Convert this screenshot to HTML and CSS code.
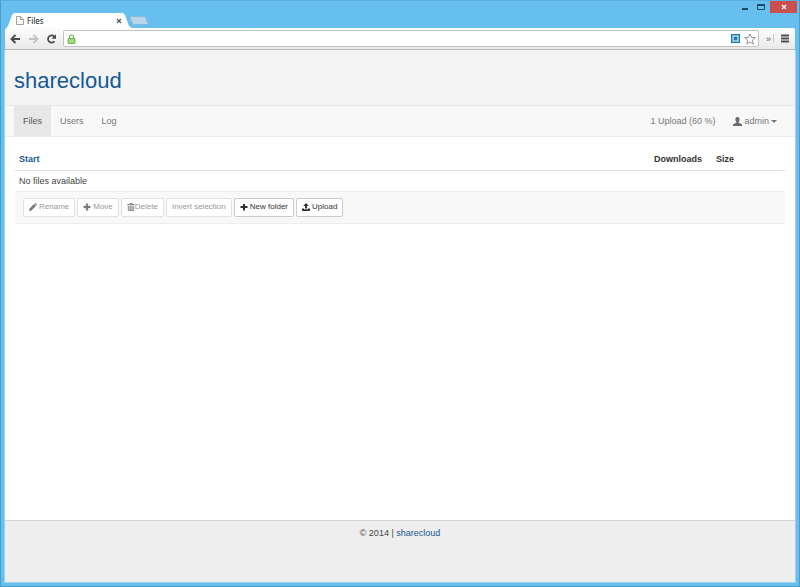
FILE: index.html
```
<!DOCTYPE html>
<html lang="en">

<head>
    <meta charset="UTF-8" />
    <meta name="viewport" content="width=device-width, initial-scale=1.0" />
    <title>Files</title>
    <link rel="stylesheet" href="styles.css">
</head>

<body>
    <div class="titlebar">
        <button class="win-btn" aria-label="Minimize">
            <svg width="8" height="8" viewBox="0 0 8 8"><path d="M1 5h6v2H1z" fill="#1d4a68"/></svg>
        </button>
        <button class="win-btn" aria-label="Maximize">
            <svg width="8" height="8" viewBox="0 0 8 8"><path d="M.5 1.500h7v5h-7z" fill="none" stroke="#1d4a68"/><path d="M0 1h8v2H0z" fill="#1d4a68"/></svg>
        </button>
        <button class="win-btn close" aria-label="Close">
            <svg width="6" height="6" viewBox="0 0 6 6"><path d="M1 1l4 4M5 1L1 5" stroke="#fff" stroke-width="1.3"/></svg>
        </button>
    </div>

    <div class="tabs">
        <div class="tab">
            <svg width="8" height="9" viewBox="0 0 8 9"><path d="M.5.5h4l3 3v5h-7zM4.500.5v3h3" fill="#fff" stroke="#8c8c8c" stroke-width=".8"/></svg>
            <span class="tab-title">Files</span>
            <button class="tab-close" aria-label="Close tab">
                <svg width="6" height="6" viewBox="0 0 6 6"><path d="M1 1l4 4M5 1L1 5" stroke="#555" stroke-width="1.1"/></svg>
            </button>
        </div>
        <button class="new-tab" aria-label="New tab">
            <svg width="20" height="9" viewBox="0 0 20 9"><path d="M1.500.5h13.500q1 0 1.500 1l2.500 6q.3 1-.7 1H5q-1 0-1.500-1L1 1.500Q.7.5 1.500.5z" fill="#b9d6e8" stroke="#88b9d6" stroke-width=".8"/></svg>
        </button>
    </div>

    <div class="toolbar">
        <button class="tool" aria-label="Back">
            <svg width="11" height="10" viewBox="0 0 11 10"><path d="M5.500 1L1.500 5l4 4M1.500 5H10" fill="none" stroke="#4d4d4d" stroke-width="1.900"/></svg>
        </button>
        <button class="tool" aria-label="Forward" disabled>
            <svg width="11" height="10" viewBox="0 0 11 10"><path d="M5.500 1l4 4-4 4M9.500 5H1" fill="none" stroke="#c4c4c4" stroke-width="1.900"/></svg>
        </button>
        <button class="tool" aria-label="Reload">
            <svg width="11" height="10" viewBox="0 0 11 10"><path d="M8.500 7.200A3.600 3.600 0 1 1 8.200 2.500" fill="none" stroke="#4d4d4d" stroke-width="1.800"/><path d="M10 .3v4.500H5.500z" fill="#4d4d4d"/></svg>
        </button>
        <div class="omnibox">
            <svg width="9" height="10" viewBox="0 0 9 10"><path d="M2.500 5V2.800a2 2 0 0 1 4 0V5" fill="none" stroke="#7cb85c" stroke-width="1.200"/><rect x="1" y="4.500" width="7" height="5" rx=".6" fill="#94d470" stroke="#62a744" stroke-width=".8"/><path d="M2 6.200h5M2 7.800h5" stroke="#c2eba9" stroke-width=".6"/></svg>
            <input type="text" aria-label="Address">
            <svg width="9" height="9" viewBox="0 0 9 9"><path d="M0 0h9v9H0z" fill="#1b7fb0"/><path d="M1.500 1.500h6v6h-6z" fill="#fff"/><path d="M2.500 2.500h4v4h-4z" fill="#1b7fb0"/></svg>
            <svg width="12" height="12" viewBox="0 0 12 12"><path d="M6 .9l1.500 3.500 3.800.3-2.900 2.500.9 3.800L6 9l-3.300 2 .9-3.800L.7 4.700l3.800-.3z" fill="#fff" stroke="#858585" stroke-width=".9"/></svg>
        </div>
        <button class="tool more" aria-label="More extensions">»</button>
        <button class="tool menu" aria-label="Menu">
            <svg width="8" height="9" viewBox="0 0 8 9"><path d="M0 1.500h8M0 4.500h8M0 7.500h8" stroke="#505050" stroke-width="2"/></svg>
        </button>
    </div>

    <div class="page">
        <header>
            <h1><a href="#">sharecloud</a></h1>
        </header>

        <nav>
            <a class="active" href="#">Files</a>
            <a href="#">Users</a>
            <a href="#">Log</a>
            <a class="uploads" href="#">1 Upload (60 %)</a>
            <a class="user" href="#">
                <svg width="9" height="9" viewBox="0 0 9 9"><path d="M4.500 0C6 0 6.700 1 6.600 2.500c0 1-.4 1.900-1 2.500v.8l2.500 1q.9.400.9 1.200v1H0V8q0-.8.900-1.200l2.500-1V5c-.6-.6-1-1.500-1-2.500C2.300 1 3 0 4.500 0z" fill="#6b6b6b"/></svg>
                admin
                <span class="caret"></span>
            </a>
        </nav>

        <main>
            <table>
                <thead>
                    <tr>
                        <th><a href="#">Start</a></th>
                        <th class="downloads">Downloads</th>
                        <th class="size">Size</th>
                    </tr>
                </thead>
                <tbody>
                    <tr>
                        <td colspan="3">No files available</td>
                    </tr>
                </tbody>
                <tfoot>
                    <tr>
                        <td colspan="3">
                            <div class="actions">
                                <button class="btn" disabled>
                                    <svg width="8" height="8" viewBox="0 0 8 8"><path d="M0 8l.6-2.500L5 1.100 6.900 3 2.500 7.400zM5.500.6l.5-.5q.3-.2.600 0L7.900 1.400q.2.300 0 .6l-.5.500z" fill="#777"/></svg>
                                    Rename
                                </button>
                                <button class="btn" disabled>
                                    <svg width="8" height="8" viewBox="0 0 8 8"><path d="M4 0l1.700 1.900H4.900v1.200h1.200V2.300L8 4 6.100 5.700V4.900H4.900v1.200h.8L4 8 2.300 6.100h.8V4.900H1.900v.8L0 4l1.900-1.700v.8h1.200V1.900h-.8z" fill="#777"/></svg>
                                    Move
                                </button>
                                <button class="btn tight" disabled>
                                    <svg width="8" height="8" viewBox="0 0 8 8"><path d="M.3 1.500h7.400M2.700 1.300V.5h2.600v.8M1.300 2.500v5h5.400v-5M2.800 2.500v4.500M4 2.500v4.500M5.200 2.500v4.500" fill="none" stroke="#777" stroke-width=".8"/></svg>
                                    Delete
                                </button>
                                <button class="btn" disabled>Invert selection</button>
                                <button class="btn">
                                    <svg width="8" height="8" viewBox="0 0 8 8"><path d="M3 1h2v2h2.500v2H5v2.500H3V5H.5V3H3z" fill="currentColor"/></svg>
                                    New folder
                                </button>
                                <button class="btn">
                                    <svg width="8" height="8" viewBox="0 0 8 8"><path d="M4 0l2.800 3H5v2.500H3V3H1.200zM0 5.500h2v.8h4v-.8h2V8H0z" fill="currentColor"/></svg>
                                    Upload
                                </button>
                            </div>
                        </td>
                    </tr>
                </tfoot>
            </table>
        </main>

        <footer>&copy; 2014 | <a href="#">sharecloud</a></footer>
    </div>
</body>

</html>
```
FILE: styles.css
```
:root {
    --frame: #66bfef;
    --frame-dark: #4a9dca;
    --link: #145a96;
}

* {
    box-sizing: border-box;
}

body {
    margin: 0;
    min-height: 100vh;
    padding: 0 4px 4px;
    border: 1px solid var(--frame-dark);
    border-top-color: #5aaedb;
    background: var(--frame);
    display: flex;
    flex-direction: column;
    font: 9px/12px "Liberation Sans", Arial, sans-serif;
    color: #444;
}

button {
    margin: 0;
    padding: 0;
    border: 0;
    background: none;
    font: inherit;
    color: inherit;
    display: flex;
    align-items: center;
    justify-content: center;
}

a {
    color: var(--link);
    text-decoration: none;
}

svg {
    flex: none;
    display: block;
}

/* window frame */
.titlebar {
    height: 12px;
    display: flex;
    justify-content: flex-end;
}

.win-btn {
    width: 16px;
    height: 12px;
}

.win-btn.close {
    width: 27px;
    margin-left: 1px;
    margin-right: -2px;
    background: #c9504f;
}

.tabs {
    height: 15px;
    padding-left: 1px;
    display: flex;
    align-items: flex-start;
}

.tab {
    width: 126px;
    height: 15px;
    padding: 0 10px;
    background: #fff;
    clip-path: polygon(0 100%, 2px 13px, 6px 2px, 8px 0, 117px 0, 119px 2px, 123px 13px, 100% 100%);
    display: flex;
    align-items: center;
    gap: 3px;
}

.tab-title {
    flex: 1;
    font-family: "Noto Sans", "Open Sans", sans-serif;
    font-size: 8px;
    color: #222;
}

.new-tab {
    margin-top: 3px;
    margin-left: -3px;
}

.toolbar {
    height: 22px;
    padding: 0 6px 0 5px;
    background: linear-gradient(#fdfdfd, #e9e9e9);
    border-bottom: 1px solid #b9b9b9;
    border-radius: 2px 2px 0 0;
    display: flex;
    align-items: center;
    gap: 7px;
}

.omnibox {
    flex: 1;
    height: 17px;
    margin-left: -1px;
    padding: 0 2px 0 3px;
    border: 1px solid #c3c3c3;
    border-radius: 2px;
    background: #fff;
    display: flex;
    align-items: center;
    gap: 4px;
}

.omnibox input {
    flex: 1;
    min-width: 0;
    padding: 0;
    border: 0;
    outline: 0;
    background: none;
    font: inherit;
}

.tool.more {
    height: 9px;
    padding-right: 2px;
    border-right: 1px solid #c9c9c9;
    color: #555;
}

/* page */
.page {
    flex: 1;
    background: #fff;
    box-shadow: 0 0 0 1px #9bd3f3;
    clip-path: inset(0 -1px -1px);
    display: flex;
    flex-direction: column;
}

header {
    padding: 18px 9px 12px;
    background: #f4f4f4;
}

h1 {
    margin: 0;
    font-size: 22px;
    line-height: 25px;
    font-weight: normal;
}

nav {
    height: 32px;
    padding: 0 9px;
    background: #f8f8f8;
    border-top: 1px solid #e9e9e9;
    border-bottom: 1px solid #e9e9e9;
    display: flex;
}

nav a {
    padding: 0 9px;
    color: #777;
    display: flex;
    align-items: center;
}

nav .active {
    background: #e7e7e7;
    color: #555;
}

nav .uploads {
    margin-left: auto;
}

nav .user {
    gap: 2px;
}

.caret {
    border: 3px solid transparent;
    border-top-color: #777;
    border-bottom: 0;
}

main {
    flex: 1;
    padding: 11px 10px;
}

table {
    width: 100%;
    border-collapse: collapse;
}

th,
td {
    padding: 4px;
    text-align: left;
}

th {
    height: 22px;
    border-bottom: 1px solid #ddd;
    color: #333;
}

.downloads {
    width: 62px;
}

.size {
    width: 73px;
}

tbody td {
    height: 21px;
}

tfoot td {
    padding: 6px 8px;
    background: #f8f8f8;
    border-top: 1px solid #eee;
    border-bottom: 1px solid #eee;
}

.actions {
    display: flex;
    flex-wrap: wrap;
    gap: 2px;
}

.btn {
    height: 19px;
    padding: 0 5px;
    gap: 2px;
    background: #fff;
    border: 1px solid #ccc;
    border-radius: 2px;
    font-size: 8px;
    color: #333;
}

.btn:disabled {
    border-color: #e2e2e2;
    color: #999;
}

.btn.tight {
    gap: 0;
}

footer {
    padding: 6px 10px 43px;
    background: #eee;
    border-top: 1px solid #d5d5d5;
    text-align: center;
}
```
